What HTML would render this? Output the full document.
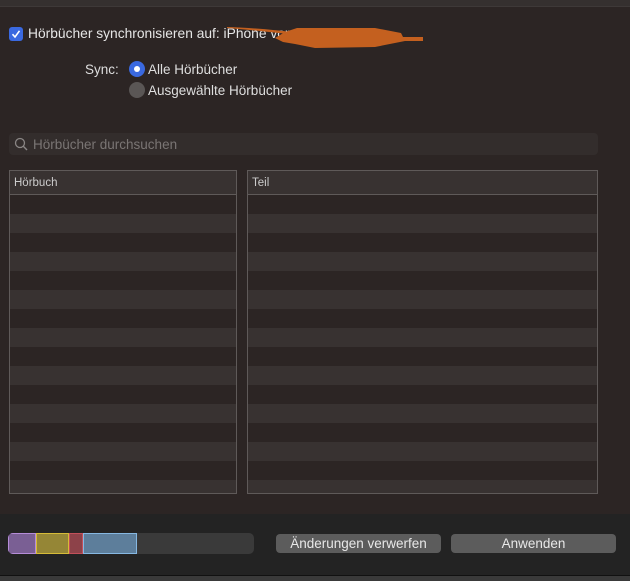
<!DOCTYPE html>
<html><head><style>
*{margin:0;padding:0;box-sizing:border-box}
body{width:630px;height:581px;background:#2c2524;font-family:"Liberation Sans",sans-serif;color:#dedede;position:relative;overflow:hidden;font-size:13.5px}
.abs{position:absolute}
.tbl{position:absolute;top:170px;height:324px;border:1px solid #5f5a59;background:repeating-linear-gradient(#2c2524 0 19px,#383231 19px 38px);background-position:0 24px;overflow:hidden}
.hdr{height:24px;background:#383231;border-bottom:1px solid #5f5a59;font-size:11.5px;line-height:24px;padding-left:4px;color:#ccc}
.btn{position:absolute;top:534px;height:19px;background:#5c5c5c;border-radius:4px;color:#e8e8e8;text-align:center;line-height:19px;font-size:13.5px}
</style></head><body>
<div class="abs" style="left:0;top:0;width:630px;height:7px;background:#35302f;border-bottom:1px solid #3e3938"></div>
<div class="abs" style="left:9px;top:27px;width:14px;height:14px;background:#3a69e0;border-radius:3px"></div>
<svg class="abs" style="left:9px;top:27px" width="14" height="14"><path d="M3.5 7.2 L6 10 L10.5 3.8" stroke="#fff" stroke-width="1.6" fill="none"/></svg>
<div class="abs" style="left:28px;top:26px;font-size:13.8px;color:#e6e6e6">Hörbücher synchronisieren auf: iPhone von</div>
<svg class="abs" style="left:225px;top:24px" width="200" height="28"><path d="M2 3 C30 4 50 6 66 8 L66 10 C50 9 30 6 2 4 Z" fill="#c4601f"/><path d="M60 8 L72 4 L150 4 L176 9 L178 13 L198 13 L198 17 L180 17 L150 23 L90 24 L70 20 L58 18 L50 14 Z" fill="#c4601f"/></svg>
<div class="abs" style="left:85px;top:62px">Sync:</div>
<div class="abs" style="left:129px;top:61px;width:16px;height:16px;border-radius:50%;background:#3a69e0"></div>
<div class="abs" style="left:134px;top:66px;width:6px;height:6px;border-radius:50%;background:#fff"></div>
<div class="abs" style="left:148px;top:62px">Alle Hörbücher</div>
<div class="abs" style="left:129px;top:82px;width:16px;height:16px;border-radius:50%;background:#5a5655"></div>
<div class="abs" style="left:148px;top:83px">Ausgewählte Hörbücher</div>
<div class="abs" style="left:9px;top:133px;width:589px;height:22px;background:#332d2c;border-radius:4px"></div>
<svg class="abs" style="left:14px;top:137px" width="14" height="14"><circle cx="6" cy="6" r="4.5" stroke="#8a8685" stroke-width="1.3" fill="none"/><path d="M9.3 9.3 L13 13" stroke="#8a8685" stroke-width="1.4"/></svg>
<div class="abs" style="left:33px;top:137px;color:#7a7574">Hörbücher durchsuchen</div>
<div class="tbl" style="left:9px;width:228px"><div class="hdr">Hörbuch</div></div>
<div class="tbl" style="left:247px;width:351px"><div class="hdr">Teil</div></div>
<div class="abs" style="left:0;top:514px;width:630px;height:61px;background:#232323"></div>
<div class="abs" style="left:0;top:575px;width:630px;height:6px;background:#3a3a3a;border-top:1px solid #111"></div>
<div class="abs" style="left:8px;top:533px;width:246px;height:21px;background:#3a3a3a;border-radius:5px;overflow:hidden;display:flex">
<div style="width:28px;background:#7a5f94;border:1px solid #b58cd8"></div>
<div style="width:33px;background:#958636;border:1px solid #d6bb38"></div>
<div style="width:14px;background:#8d4249;border:1px solid #c2505a"></div>
<div style="width:54px;background:#5d7e9b;border:1px solid #86b8e2"></div>
</div>
<div class="btn" style="left:276px;width:165px">Änderungen verwerfen</div>
<div class="btn" style="left:451px;width:165px">Anwenden</div>
</body></html>
